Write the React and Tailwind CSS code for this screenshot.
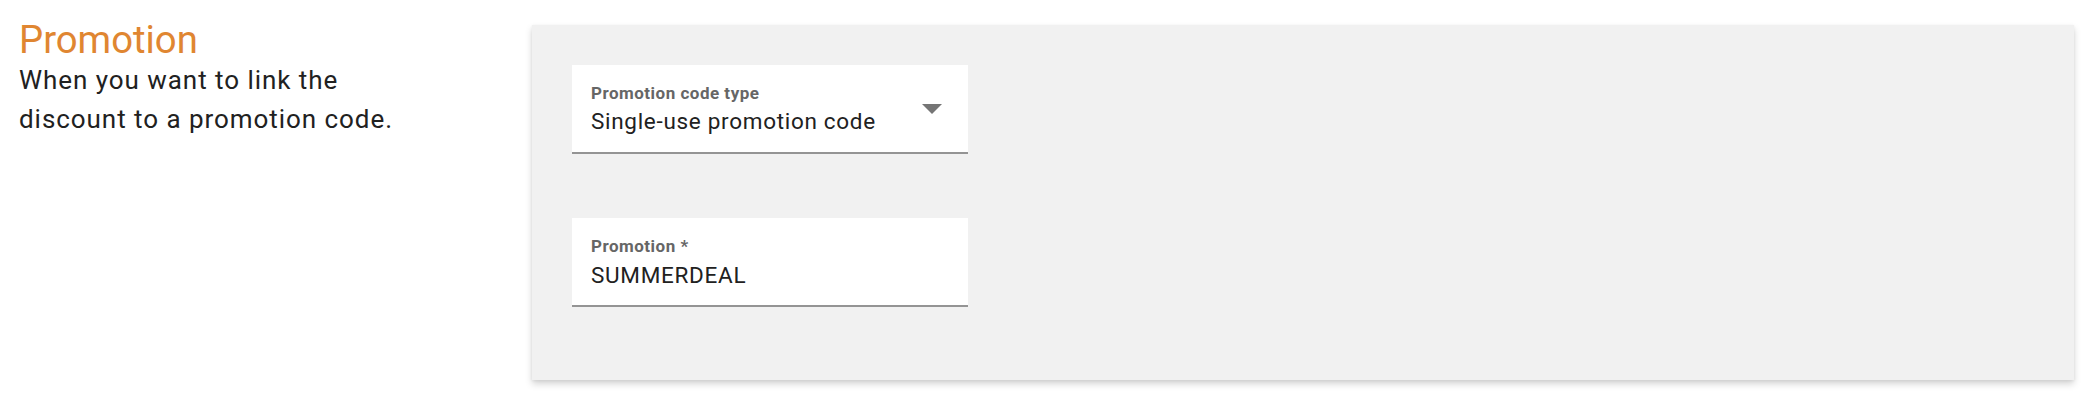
export default function App() {
  return (
    <div className="flex w-[2100px] h-[406px] bg-white pl-[19px] pt-[18px]" style={{ fontFamily: 'Roboto, "Noto Sans", sans-serif' }}>
      <div className="w-[513px] shrink-0">
        <h2 className="text-[38.3px] leading-[43px] text-[#e08631] font-normal">Promotion</h2>
        <p className="w-[420px] text-[26px] leading-[39px] tracking-[0.95px] text-[#212121]">
          When you want to link the discount to a promotion code.
        </p>
      </div>
      <div className="mt-[7px] w-[1542px] h-[355px] bg-[#f1f1f1] shadow-[0_4px_7px_rgba(0,0,0,0.17),0_1px_3px_rgba(0,0,0,0.06)] pt-[40px] pl-[40px] flex flex-col gap-[64px]">
        <div className="w-[396px] h-[89px] bg-white border-b-2 border-[#949494] flex items-center pl-[19px] pr-[26px]">
          <div className="flex-1 self-start pt-[18.4px] flex flex-col gap-[4px]">
            <span className="text-[17px] leading-[20px] font-bold tracking-[0.5px] text-[#666666]">Promotion code type</span>
            <span className="text-[22.5px] leading-[28px] tracking-[0.7px] text-[#212121]">Single-use promotion code</span>
          </div>
          <svg width="20" height="10" viewBox="0 0 20 10" className="mt-[1px]">
            <path d="M0 0 L20 0 L10 10 Z" fill="#757575" />
          </svg>
        </div>
        <div className="w-[396px] h-[89px] bg-white border-b-2 border-[#949494] flex pl-[19px]">
          <div className="flex-1 pt-[18.4px] flex flex-col gap-[5px]">
            <span className="text-[17px] leading-[20px] font-bold tracking-[0.5px] text-[#666666]">Promotion *</span>
            <span className="text-[22.5px] leading-[28px] tracking-[0.7px] text-[#212121]">SUMMERDEAL</span>
          </div>
        </div>
      </div>
    </div>
  );
}
